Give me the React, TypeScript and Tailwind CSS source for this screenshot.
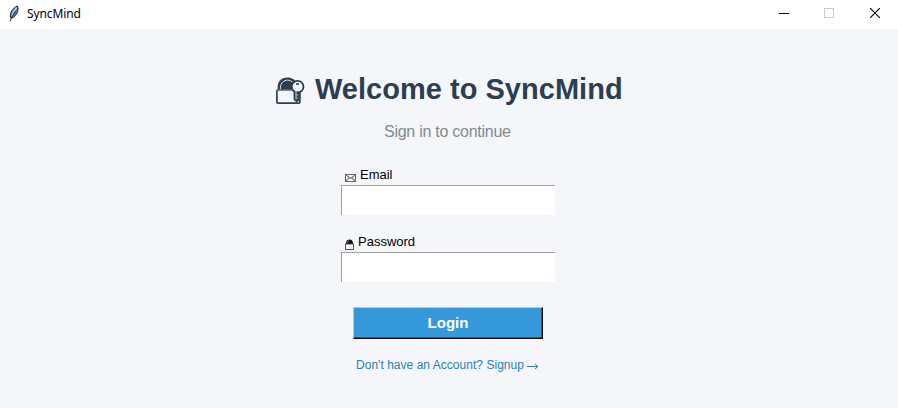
import React from "react";

function Feather() {
  return (
    <svg width="16" height="18" viewBox="0 0 16 18" className="shrink-0">
      <path d="M4.6 12.4C3.6 8 6.4 3.2 11.4 1C13.2 5 11 10.6 5.8 13.2Z" fill="#4b86bd" stroke="#111" strokeWidth="0.9" />
      <path d="M10.6 2.6C8.2 5 6.4 8.4 5.8 11.4" fill="none" stroke="#b8dcf5" strokeWidth="1.4" />
      <path d="M9.6 6.4C7.6 8.8 5.4 12.4 4 16.4" fill="none" stroke="#111" strokeWidth="0.9" />
    </svg>
  );
}

function LockWithKey() {
  return (
    <svg width="29" height="28" viewBox="0 0 29 28" className="shrink-0">
      <path d="M1.6 13V9.5C2.2 3.6 6.2 0.6 11.4 0.6C16 0.6 19.5 3 21 6.5L17 13Z" fill="#2c3e50" />
      <path d="M4.4 12.5V10C5 5.6 7.8 3.2 11.6 3.2C14 3.2 16 4.2 17.2 5.8" fill="none" stroke="#f5f6fa" strokeWidth="0.9" />
      <rect x="0.9" y="13" width="23" height="13.2" rx="1.2" fill="#f5f6fa" stroke="#2c3e50" strokeWidth="1.7" />
      <path d="M2 13.2H17" stroke="#8a949f" strokeWidth="1.2" />
      <circle cx="21.6" cy="9.8" r="5.9" fill="#f5f6fa" stroke="#2c3e50" strokeWidth="1.8" />
      <path d="M17.6 14.6H23V23.4L20.6 25.4L17.6 22.8Z" fill="#2c3e50" />
      <path d="M20 13.6V22.6M21.4 17.2V18.4M21.4 20.4V21.6" fill="none" stroke="#c3c9d0" strokeWidth="1.1" />
      <path d="M20 7H23" stroke="#2c3e50" strokeWidth="1.6" />
    </svg>
  );
}

function Envelope() {
  return (
    <svg width="11" height="8" viewBox="0 0 11 8" className="shrink-0">
      <rect x="0.5" y="0.5" width="10" height="7" fill="#fafafa" stroke="#666" />
      <path d="M1 1L5.5 4.5L10 1M1 7L4.2 3.8M10 7L6.8 3.8" fill="none" stroke="#777" strokeWidth="1.1" />
    </svg>
  );
}

function Padlock() {
  return (
    <svg width="9" height="11" viewBox="0 0 9 11" className="shrink-0">
      <path d="M1 5.5V3.5C1.3 1.6 2.6 0.5 4.5 0.5S7.7 1.6 8 3.5V5.5Z" fill="#111" />
      <path d="M2.2 4.2C2.3 2.6 3 1.8 4.2 1.7" fill="none" stroke="#9ab" strokeWidth="0.7" />
      <rect x="0.5" y="5" width="8" height="5.5" fill="#fafafa" stroke="#444" strokeWidth="0.9" />
    </svg>
  );
}

function TitleBar() {
  return (
    <header className="flex h-[29px] items-center bg-white">
      <div className="flex flex-1 items-center pb-[2px] pl-[6px]">
        <Feather />
        <span className="ml-[5px] font-['Noto_Sans','Open_Sans',sans-serif] text-[12px] leading-4 tracking-[-0.12px] text-black">SyncMind</span>
      </div>
      <div className="flex h-full pb-[3px]">
        <button className="flex w-[46px] items-center justify-center pl-[2px]" aria-label="Minimize">
          <svg width="10" height="10" shapeRendering="crispEdges"><path d="M0 5.5H10" stroke="#000" /></svg>
        </button>
        <button className="flex w-[46px] items-center justify-center" aria-label="Maximize">
          <svg width="10" height="10" shapeRendering="crispEdges"><rect x="0.5" y="0.5" width="9" height="9" fill="none" stroke="#ccc" /></svg>
        </button>
        <button className="flex w-[46px] items-center justify-center" aria-label="Close">
          <svg width="10" height="10"><path d="M0 0L10 10M10 0L0 10" stroke="#000" strokeWidth="1.1" /></svg>
        </button>
      </div>
    </header>
  );
}

function TextField({ type }: { type: string }) {
  return <input type={type} className="block h-[30px] w-[214px] border-t border-l border-[#a0a0a0] bg-white px-1 text-[13px] outline-none" />;
}

export default function App() {
  return (
    <div className="flex h-[408px] w-[898px] flex-col bg-[#f5f6fa] font-['Liberation_Sans',Arial,sans-serif]">
      <TitleBar />
      <main className="flex flex-col">
        <div className="mt-[42px] ml-[276px] flex h-9 items-center">
          <div className="pt-1"><LockWithKey /></div>
          <h1 className="ml-[10px] text-[29px] leading-9 font-bold tracking-[0.02px] whitespace-nowrap text-[#2c3e50]">Welcome to SyncMind</h1>
        </div>
        <p className="mt-[15px] ml-[384px] text-[16px] leading-5 tracking-[-0.26px] text-[#7f8c8d]">Sign in to continue</p>
        <div className="mt-[24px] ml-[341px]">
          <label className="flex h-[19px] items-center pb-px pl-1 text-[13px] leading-4 text-black">
            <span className="pt-[6px]"><Envelope /></span>
            <span className="ml-[4px]">Email</span>
          </label>
          <TextField type="email" />
        </div>
        <div className="mt-[18px] ml-[341px]">
          <label className="flex h-[19px] items-center pb-px pl-1 text-[13px] leading-4 text-black">
            <span className="pt-[5px]"><Padlock /></span>
            <span className="ml-[4px]">Password</span>
          </label>
          <TextField type="password" />
        </div>
        <button className="mt-[25px] ml-[353px] h-8 w-[190px] border-t border-r border-b border-l border-t-[#8fd0ff] border-r-black border-b-black border-l-[#8fd0ff] bg-[#3498db] text-[15px] leading-5 font-bold text-white shadow-[inset_-1px_-1px_0_#1f5b83]">
          Login
        </button>
        <a className="mt-[18px] ml-[356px] flex items-center text-[12px] leading-4 whitespace-nowrap text-[#2980b9]">
          <span className="tracking-[0.03px]">Don't have an Account? Signup</span>
          <svg width="12" height="7" viewBox="0 0 12 7" className="mt-[2px] ml-[3px]"><path d="M0 3.5H11M8 1L11 3.5L8 6" fill="none" stroke="currentColor" /></svg>
        </a>
      </main>
    </div>
  );
}
